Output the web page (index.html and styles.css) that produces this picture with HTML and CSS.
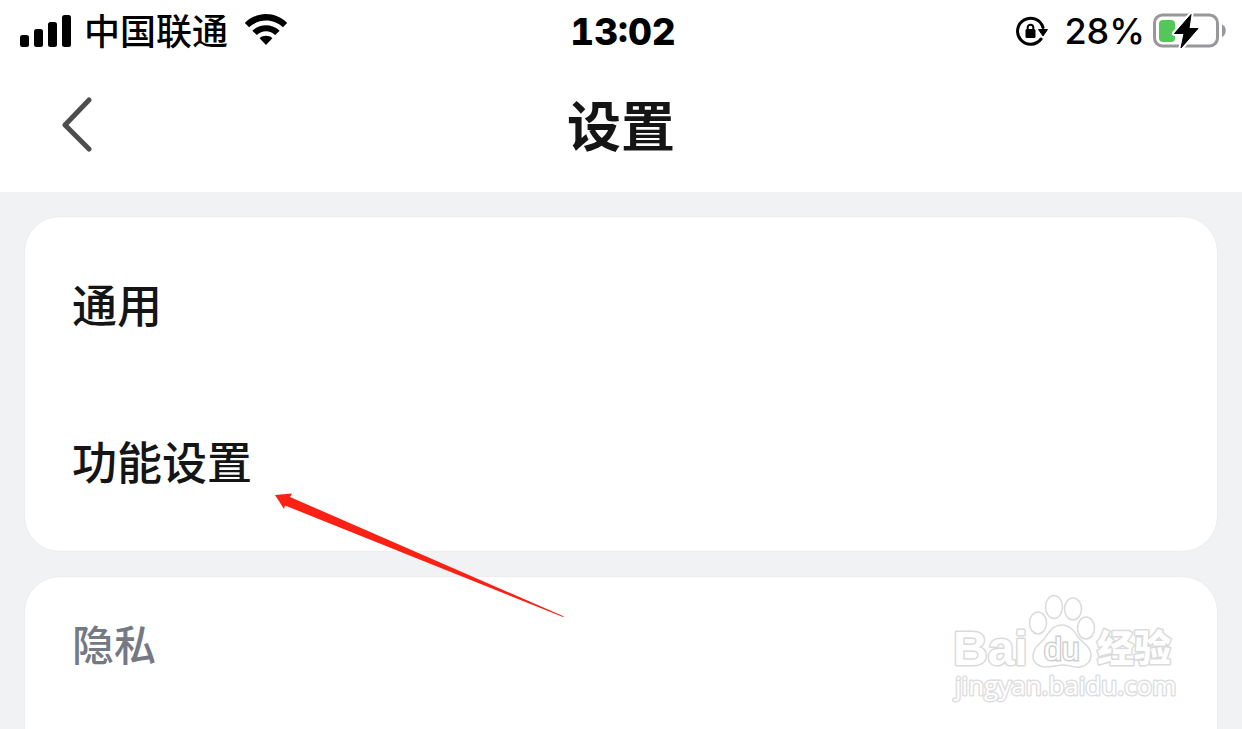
FILE: index.html
```html
<!DOCTYPE html>
<html lang="zh-CN">
<head>
<meta charset="utf-8">
<meta name="viewport" content="width=device-width, initial-scale=1">
<title>设置</title>
<link rel="stylesheet" href="styles.css">
</head>
<body>
<div class="page">
  <div class="status">
    <div class="status-left">
      <svg class="signal" width="52" height="32" viewBox="0 0 52 32" aria-hidden="true">
        <rect x="0" y="20" width="9" height="12" rx="2.5"/>
        <rect x="14" y="14" width="9" height="18" rx="2.5"/>
        <rect x="28" y="7" width="9" height="25" rx="2.5"/>
        <rect x="42" y="0" width="9" height="32" rx="2.5"/>
      </svg>
      <span class="carrier">中国联通</span>
      <svg class="wifi" width="46" height="34" viewBox="0 0 46 34" aria-hidden="true">
        <path d="M0.500 9.500C13-3 33-3 45.500 9.500L41 14.200C31 4.500 15 4.500 5 14.200Z"/>
        <path d="M8.500 17.800C16.500 10 29.500 10 37.500 17.800L32.800 22.400C27.500 17 18.500 17 13.200 22.400Z"/>
        <path d="M16.200 25.700C20 22.300 26 22.300 29.800 25.700L23 33Z"/>
      </svg>
    </div>
    <time class="clock">13:02</time>
    <div class="status-right">
      <svg class="lock" width="32" height="30" viewBox="0 0 32 30" aria-hidden="true">
        <path d="M25 23A13 13 0 1 1 27 11.500" fill="none" stroke="#000" stroke-width="3" stroke-linecap="round"/>
        <path d="M22.500 13.500H31.500L27 20Z" stroke="#000" stroke-linejoin="round"/>
        <rect x="9.500" y="13" width="10" height="9" rx="1.500"/>
        <path d="M11.700 14V11.500A2.800 2.800 0 0 1 17.300 11.500V14" fill="none" stroke="#000" stroke-width="2"/>
      </svg>
      <span class="percent">28%</span>
      <svg class="battery" width="73" height="36" viewBox="0 0 73 36" aria-hidden="true">
        <rect x="1.500" y="2" width="63" height="31" rx="8" fill="none" stroke="#98989b" stroke-width="3"/>
        <path d="M69 11.500C74 13 74 22 69 24Z" fill="#98989b"/>
        <rect x="6" y="7" width="16" height="22" rx="4" fill="#54c759"/>
        <path d="M38 1.500L21.500 20.500H31L28 35L45 15.500H36Z" fill="none" stroke="#fff" stroke-width="5" stroke-linejoin="round"/>
        <path d="M38 1.500L21.500 20.500H31L28 35L45 15.500H36Z" stroke="#000" stroke-linejoin="round"/>
      </svg>
    </div>
  </div>
  <header class="nav">
    <button class="back" type="button" aria-label="返回">
      <svg width="32" height="56" viewBox="0 0 32 56" aria-hidden="true"><path d="M29 4L5 29L29 53" fill="none" stroke="#4d4d4d" stroke-width="5" stroke-linecap="round" stroke-linejoin="round"/></svg>
    </button>
    <h1 class="title">设置</h1>
  </header>
  <main class="content">
    <section class="card card-main">
      <a class="row" href="#general">通用</a>
      <a class="row" href="#features">功能设置</a>
      <svg class="arrow" width="292" height="126" viewBox="0 0 292 126" aria-hidden="true">
        <path d="M1 3L18 1.500L16 5L290 124.500L289 125L11 13.500L10 17Z" fill="#fb2114"/>
      </svg>
    </section>
    <section class="card card-last">
      <h2 class="group">隐私</h2>
    </section>
  </main>
  <svg class="watermark" width="226" height="110" viewBox="0 0 226 110" role="img" aria-label="Baidu 经验 jingyan.baidu.com">
    <g class="outline">
      <text class="wm-bai" x="1" y="72">Bai</text>
      <text class="wm-cn" x="145" y="69">经验</text>
      <text class="wm-url" x="3" y="102">jingyan.baidu.com</text>
    </g>
    <g transform="translate(-2 -1)" fill="#fff" stroke="#dadada" stroke-width="1.500">
      <ellipse cx="88" cy="31" rx="8.500" ry="11"/>
      <ellipse cx="104" cy="15" rx="8.500" ry="11.500"/>
      <ellipse cx="123" cy="17" rx="8.500" ry="11"/>
      <ellipse cx="136" cy="36" rx="8.500" ry="11"/>
      <path d="M112 33C103 33 99 40 94 47C89 53 83 56 83 64C83 71 89 75 96 75C103 75 107 73 113 73C119 73 124 76 130 75C137 74 141 69 141 63C141 55 133 51 128 45C124 39 120 33 112 33Z"/>
    </g>
    <text class="wm-du" x="92" y="67">du</text>
  </svg>
</div>
</body>
</html>
```
FILE: styles.css
```css
* { box-sizing: border-box; }

body {
  margin: 0;
  background: #f1f2f4;
  color: #151515;
  font-family: "Noto Sans CJK SC", sans-serif;
}

.page {
  position: relative;
  display: flex;
  flex-direction: column;
  min-height: 100vh;
}

.status {
  display: grid;
  grid-template-columns: 1fr auto 1fr;
  align-items: center;
  height: 62px;
  padding: 0 16px 0 20px;
  background: #fff;
  color: #000;
}

.status-left,
.status-right {
  display: flex;
  align-items: center;
}

.status-left { gap: 12px; }

.wifi {
  margin-left: 3px;
  padding-bottom: 2px;
}

.status-right {
  justify-content: flex-end;
  gap: 8px;
}

.carrier {
  font-size: 36px;
  font-weight: 500;
  line-height: 56px;
  padding-bottom: 4px;
}

.clock {
  font-family: Inter, sans-serif;
  font-size: 37px;
  font-weight: 800;
  font-variant-numeric: tabular-nums;
}

.percent {
  padding-left: 8px;
  font-family: Inter, sans-serif;
  font-size: 36px;
  font-weight: 500;
}

.nav {
  display: grid;
  grid-template-columns: 1fr auto 1fr;
  align-items: center;
  height: 130px;
  padding: 0 60px 6px;
  background: #fff;
}

.back {
  justify-self: start;
  display: flex;
  padding: 0;
  border: 0;
  background: none;
}

.title {
  margin: 0;
  font-size: 54px;
  font-weight: 700;
  line-height: 80px;
}

.content {
  flex: 1;
  display: flex;
  flex-direction: column;
  gap: 24px;
  padding: 24px 24px 0;
}

.card {
  background: #fff;
  border: 1px solid #ededef;
  border-radius: 36px;
}

.card-main {
  position: relative;
  padding: 8px 0 12px;
}

.row {
  display: flex;
  align-items: center;
  height: 157px;
  padding: 0 47px;
  color: inherit;
  font-size: 45px;
  font-weight: 500;
  text-decoration: none;
}

.arrow {
  position: absolute;
  left: 249px;
  top: 275px;
}

.card-last {
  flex: 1;
  padding: 36px 47px 20px;
  border-bottom: 0;
  border-radius: 36px 36px 0 0;
}

.group {
  margin: 0;
  color: #747983;
  font-size: 42px;
  font-weight: 500;
  line-height: 60px;
}

.watermark {
  position: absolute;
  right: 64px;
  bottom: 26px;
}

.outline {
  fill: #fff;
  stroke: #dadada;
  stroke-width: 3px;
  stroke-linejoin: round;
  paint-order: stroke;
}

.wm-bai {
  font: 700 48px "Liberation Sans", sans-serif;
}

.wm-cn {
  font: 900 37px "Noto Sans CJK SC", sans-serif;
}

.wm-url {
  font: 400 26px "Open Sans", sans-serif;
  stroke: #dedede;
}

.wm-du {
  font: 400 32px "Liberation Sans", sans-serif;
  fill: #fff;
  stroke: #cfcfcf;
  stroke-width: 3px;
  paint-order: stroke;
}
```
